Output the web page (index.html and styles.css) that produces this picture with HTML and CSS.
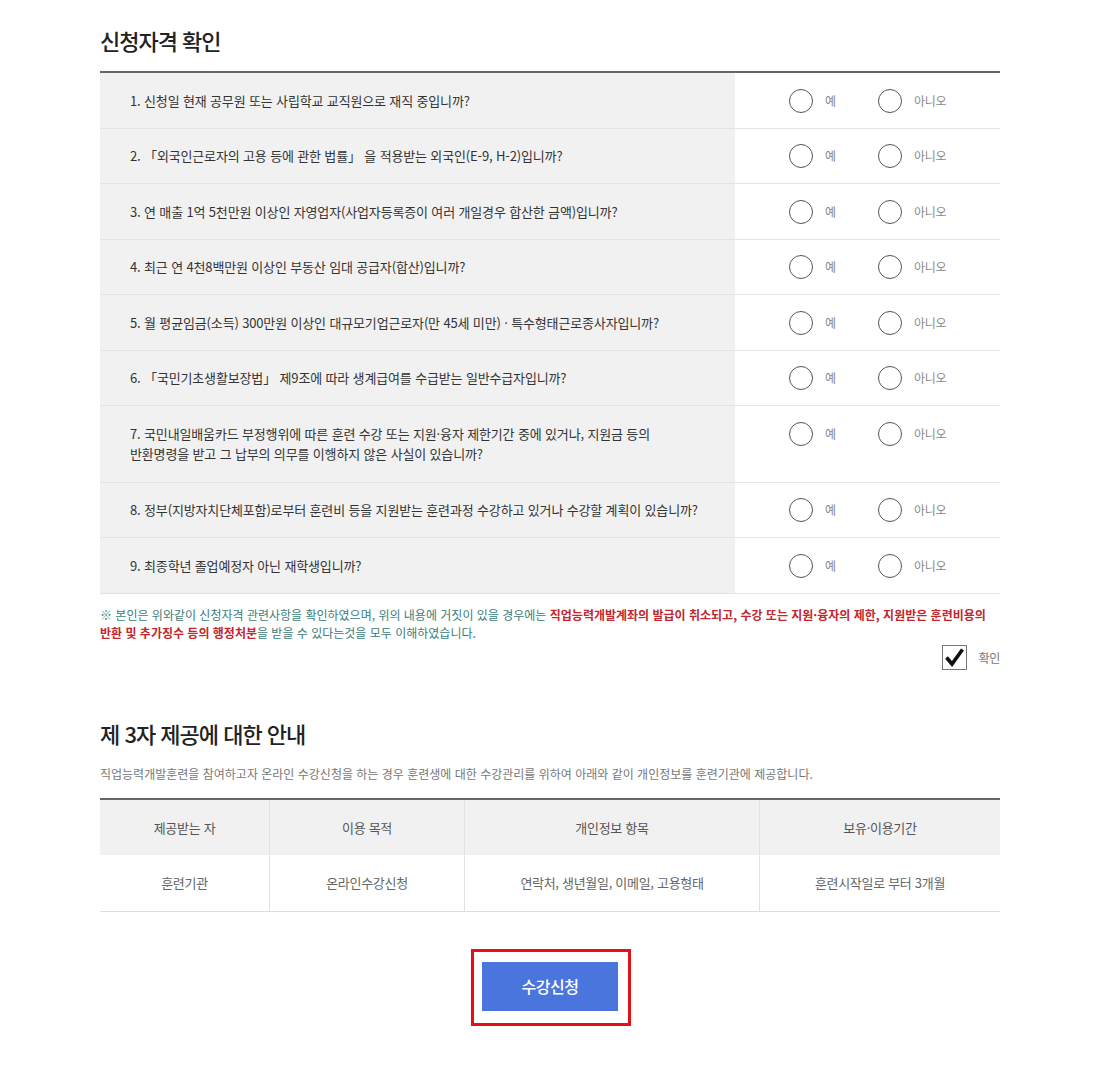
FILE: index.html
```html
<!DOCTYPE html>
<html lang="ko">
<head>
<meta charset="utf-8">
<title>신청자격 확인</title>
<link rel="stylesheet" href="styles.css">
</head>
<body>
<div class="wrap">
  <h2 class="sec-title">신청자격 확인</h2>
  <div class="qtable">
    <div class="qrow">
      <div class="q">1. 신청일 현재 공무원 또는 사립학교 교직원으로 재직 중입니까?</div>
      <div class="a"><span class="radio"></span><span class="lbl yes">예</span><span class="radio"></span><span class="lbl">아니오</span></div>
    </div>
    <div class="qrow">
      <div class="q">2. 「외국인근로자의 고용 등에 관한 법률」 을 적용받는 외국인(E-9, H-2)입니까?</div>
      <div class="a"><span class="radio"></span><span class="lbl yes">예</span><span class="radio"></span><span class="lbl">아니오</span></div>
    </div>
    <div class="qrow">
      <div class="q">3. 연 매출 1억 5천만원 이상인 자영업자(사업자등록증이 여러 개일경우 합산한 금액)입니까?</div>
      <div class="a"><span class="radio"></span><span class="lbl yes">예</span><span class="radio"></span><span class="lbl">아니오</span></div>
    </div>
    <div class="qrow">
      <div class="q">4. 최근 연 4천8백만원 이상인 부동산 임대 공급자(합산)입니까?</div>
      <div class="a"><span class="radio"></span><span class="lbl yes">예</span><span class="radio"></span><span class="lbl">아니오</span></div>
    </div>
    <div class="qrow">
      <div class="q">5. 월 평균임금(소득) 300만원 이상인 대규모기업근로자(만 45세 미만) · 특수형태근로종사자입니까?</div>
      <div class="a"><span class="radio"></span><span class="lbl yes">예</span><span class="radio"></span><span class="lbl">아니오</span></div>
    </div>
    <div class="qrow">
      <div class="q">6. 「국민기초생활보장법」 제9조에 따라 생계급여를 수급받는 일반수급자입니까?</div>
      <div class="a"><span class="radio"></span><span class="lbl yes">예</span><span class="radio"></span><span class="lbl">아니오</span></div>
    </div>
    <div class="qrow tall">
      <div class="q">7. 국민내일배움카드 부정행위에 따른 훈련 수강 또는 지원·융자 제한기간 중에 있거나, 지원금 등의<br>반환명령을 받고 그 납부의 의무를 이행하지 않은 사실이 있습니까?</div>
      <div class="a"><span class="radio"></span><span class="lbl yes">예</span><span class="radio"></span><span class="lbl">아니오</span></div>
    </div>
    <div class="qrow">
      <div class="q">8. 정부(지방자치단체포함)로부터 훈련비 등을 지원받는 훈련과정 수강하고 있거나 수강할 계획이 있습니까?</div>
      <div class="a"><span class="radio"></span><span class="lbl yes">예</span><span class="radio"></span><span class="lbl">아니오</span></div>
    </div>
    <div class="qrow">
      <div class="q">9. 최종학년 졸업예정자 아닌 재학생입니까?</div>
      <div class="a"><span class="radio"></span><span class="lbl yes">예</span><span class="radio"></span><span class="lbl">아니오</span></div>
    </div>
  </div>
  <p class="notice">※ 본인은 위와같이 신청자격 관련사항을 확인하였으며, 위의 내용에 거짓이 있을 경우에는 <strong>직업능력개발계좌의 발급이 취소되고, 수강 또는 지원·융자의 제한, 지원받은 훈련비용의<br>반환 및 추가징수 등의 행정처분</strong>을 받을 수 있다는것을 모두 이해하였습니다.</p>
  <div class="confirm">
    <span class="chk"><svg width="23" height="23" viewBox="0 0 23 23"><path d="M3.5 11.5 L9 18 L19.5 3.5" fill="none" stroke="#111" stroke-width="3.6" stroke-linejoin="miter" stroke-linecap="butt"/></svg></span>
    <span class="chk-lbl">확인</span>
  </div>

  <h2 class="sec-title second">제 3자 제공에 대한 안내</h2>
  <p class="desc">직업능력개발훈련을 참여하고자 온라인 수강신청을 하는 경우 훈련생에 대한 수강관리를 위하여 아래와 같이 개인정보를 훈련기관에 제공합니다.</p>
  <div class="ptable">
    <div class="pcell head">제공받는 자</div>
    <div class="pcell head">이용 목적</div>
    <div class="pcell head">개인정보 항목</div>
    <div class="pcell head">보유·이용기간</div>
    <div class="pcell">훈련기관</div>
    <div class="pcell">온라인수강신청</div>
    <div class="pcell">연락처, 생년월일, 이메일, 고용형태</div>
    <div class="pcell">훈련시작일로 부터 3개월</div>
  </div>
  <div class="btn-area">
    <div class="highlight"><button class="btn" type="button">수강신청</button></div>
  </div>
</div>
</body>
</html>
```

FILE: styles.css
```css
* { box-sizing: border-box; }
html, body { margin: 0; padding: 0; background: #fff; }
body {
  font-family: "Noto Sans CJK KR", "Noto Sans", sans-serif;
  color: #333;
  letter-spacing: -0.3px;
}
.wrap {
  width: 900px;
  margin: 0 auto;
  padding-top: 24px;
  padding-bottom: 40px;
}
.sec-title {
  margin: 0;
  font-size: 22px;
  line-height: 32px;
  font-weight: 500;
  color: #222;
  letter-spacing: -1px;
}
.qtable {
  margin-top: 15px;
  border-top: 2px solid #666;
}
.qrow {
  display: flex;
  border-bottom: 1px solid #e3e3e3;
}
.q {
  width: 635px;
  background: #f1f1f2;
  padding: 17.5px 30px 17px;
  font-size: 13px;
  line-height: 20px;
  color: #333;
  letter-spacing: -0.15px;
}
.qrow.tall .q { padding-bottom: 18px; }
.a {
  flex: 1;
  display: flex;
  align-items: flex-start;
  padding: 15.5px 0 0 54px;
}
.radio {
  width: 24px;
  height: 24px;
  border: 1px solid #555;
  border-radius: 50%;
  flex: none;
}
.lbl {
  font-size: 12px;
  line-height: 24px;
  color: #888;
  margin-left: 12px;
}
.lbl.yes { width: 53px; }
.notice {
  margin: 12px 0 0;
  font-size: 12px;
  line-height: 18px;
  color: #3a7d7a;
  letter-spacing: 0;
}
.notice strong {
  color: #c3262c;
  font-weight: 700;
}
.confirm {
  display: flex;
  justify-content: flex-end;
  align-items: center;
  margin-top: 3px;
}
.chk {
  width: 25px;
  height: 25px;
  border: 1px solid #777;
  background: #fff;
  display: flex;
  align-items: center;
  justify-content: center;
}
.chk-lbl {
  font-size: 12px;
  color: #777;
  margin-left: 12px;
}
.second {
  margin-top: 47px;
}
.desc {
  margin: 16px 0 0;
  font-size: 12px;
  line-height: 18px;
  color: #777;
  letter-spacing: 0;
}
.ptable {
  margin-top: 15px;
  display: grid;
  grid-template-columns: 169px 195px 295px 1fr;
  border-top: 2px solid #666;
  border-bottom: 1px solid #ddd;
}
.pcell {
  height: 56px;
  display: flex;
  align-items: center;
  justify-content: center;
  font-size: 13px;
  color: #666;
  border-left: 1px solid #e2e2e2;
}
.pcell:nth-child(4n+1) { border-left: none; }
.pcell.head {
  background: #f1f1f1;
  color: #555;
  height: 55px;
}
.btn-area {
  display: flex;
  justify-content: center;
  margin-top: 37px;
  padding-left: 2px;
}
.highlight {
  border: 3px solid #e3101a;
  padding: 10px 10px 12px 8px;
}
.btn {
  display: block;
  width: 136px;
  height: 49px;
  border: none;
  background: #4a75dc;
  color: #fff;
  font-family: "Noto Sans CJK KR", "Noto Sans", sans-serif;
  font-size: 16px;
  font-weight: 500;
  letter-spacing: -0.5px;
  cursor: pointer;
}
```
